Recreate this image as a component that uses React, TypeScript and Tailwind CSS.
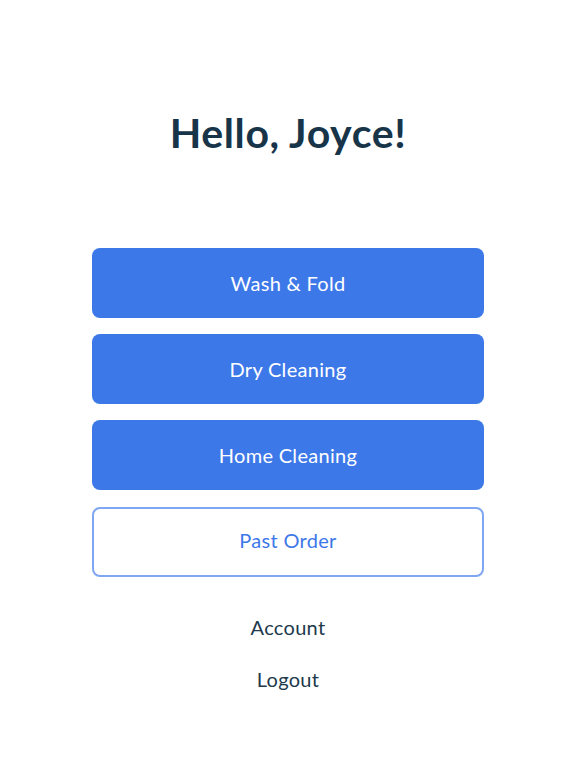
export default function App() {
  const services = ["Wash & Fold", "Dry Cleaning", "Home Cleaning"]

  return (
    <div className="min-h-[768px] bg-white flex flex-col items-center font-['Lato',sans-serif]">
      <h1 className="mt-[108px] text-[41px] leading-[50px] font-bold text-[#173449] tracking-[0.6px]">
        Hello, Joyce!
      </h1>

      <div className="mt-[90px] w-[392px] flex flex-col gap-4">
        {services.map((s) => (
          <button
            key={s}
            className="h-[70px] w-full rounded-lg bg-[#3d78e9] text-white text-[20px] tracking-[0.3px]"
          >
            {s}
          </button>
        ))}
        <button className="mt-px h-[70px] w-full rounded-lg border-2 border-[#7ea6f2] bg-white text-[#3d78e9] text-[20px] tracking-[0.3px] pb-1">
          Past Order
        </button>
      </div>

      <div className="mt-[35px] flex flex-col items-center gap-[22px] text-[20px] text-[#1d394c] tracking-[0.3px]">
        <button>Account</button>
        <button>Logout</button>
      </div>
    </div>
  )
}
